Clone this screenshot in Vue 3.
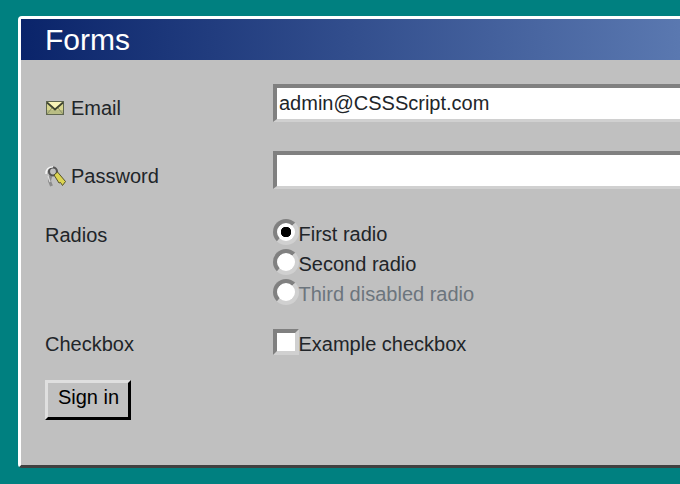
<script setup>
const radios = [
  { label: 'First radio', checked: true, disabled: false },
  { label: 'Second radio', checked: false, disabled: false },
  { label: 'Third disabled radio', checked: false, disabled: true },
]
</script>

<template>
  <main class="page">
    <section class="card">
      <h1 class="title">Forms</h1>
      <form class="body" @submit.prevent>
        <div class="row row-input">
          <label class="label">
            <svg class="icon mail" width="18" height="16" viewBox="0 0 18 16">
              <rect x="0.5" y="1.5" width="17" height="13" fill="#d8d68e" stroke="#5f6650"/>
              <rect x="1" y="10" width="16" height="4" fill="#b9bd84"/>
              <path d="M1 2 L9 9 L17 2 Z" fill="#f8f4b8"/>
              <path d="M1 2.5 L9 9.5 L17 2.5" fill="none" stroke="#3f4430" stroke-width="1.8"/>
              <path d="M1 14 L6 8 M17 14 L12 8" stroke="#8d9268" stroke-width="1"/>
            </svg>
            <span>Email</span>
          </label>
          <input class="text" type="text" value="admin@CSSScript.com" />
        </div>
        <div class="row row-input pw">
          <label class="label">
            <svg class="icon keys" width="22" height="21" viewBox="0 0 22 21">
              <path d="M7 9 L5.5 15 L7.5 20" fill="none" stroke="#8c8c8c" stroke-width="3"/>
              <path d="M4 10 L6 16" stroke="#dcdcdc" stroke-width="1.2"/>
              <circle cx="9" cy="5.5" r="4" fill="none" stroke="#555" stroke-width="2.2"/>
              <path d="M2 8 C2 3.5 5 1 9 0.8" fill="none" stroke="#f4f4f4" stroke-width="1.6"/>
              <path d="M10 9 L13.5 6 L21.5 15.5 L18.5 19.5 L16.5 16.5 L15 17 Z" fill="#dcd452" stroke="#55532a" stroke-width="1"/>
            </svg>
            <span>Password</span>
          </label>
          <input class="text" type="password" />
        </div>
        <div class="row radios-row">
          <span class="label plain">Radios</span>
          <div class="stack">
            <label v-for="r in radios" :key="r.label" class="opt" :class="{ off: r.disabled }">
              <input class="radio" type="radio" name="r" :checked="r.checked" :disabled="r.disabled" />
              <span class="opt-text">{{ r.label }}</span>
            </label>
          </div>
        </div>
        <div class="row check-row">
          <span class="label plain">Checkbox</span>
          <label class="opt">
            <input class="check" type="checkbox" />
            <span class="opt-text">Example checkbox</span>
          </label>
        </div>
        <button class="btn" type="submit">Sign in</button>
      </form>
    </section>
  </main>
</template>

<style scoped>
.page {
  width: 680px;
  height: 484px;
  overflow: hidden;
  background: #008080;
  padding: 16px 0 0 18px;
  box-sizing: border-box;
  font-family: "Liberation Sans", Arial, sans-serif;
  font-size: 20px;
  color: #212529;
}
.card {
  width: 1000px;
  height: 452px;
  box-sizing: border-box;
  background: #c0c0c0;
  border-top: 3px solid #fff;
  border-left: 3px solid #fff;
  border-bottom: 3px solid #404040;
  border-radius: 4px 0 0 4px;
}
.title {
  margin: 0;
  height: 41px;
  padding-left: 24px;
  font-size: 30px;
  font-weight: 400;
  line-height: 41px;
  color: #fff;
  background: linear-gradient(90deg, #0a246a, #5a78b0 66%, #a6caf0);
}
.body {
  padding: 24px 0 0 24px;
}
.row {
  display: grid;
  grid-template-columns: 228px 700px;
}
.row-input {
  align-items: center;
  height: 38px;
}
.pw {
  margin-top: 29px;
}
.label {
  display: flex;
  align-items: center;
  gap: 7px;
  line-height: 24px;
}
.row-input .label {
  position: relative;
  top: 5px;
}
.pw .label {
  top: 6px;
}
.icon {
  flex: none;
}
.mail {
  margin-left: 1px;
}
.keys {
  margin: 0 -2px 0 -1px;
}
.text {
  width: 100%;
  height: 38px;
  box-sizing: border-box;
  padding: 0 2px;
  border: 4px solid;
  border-color: #808080 #d0d0d0 #d0d0d0 #808080;
  border-bottom-width: 3px;
  background: #fff;
  font: inherit;
  color: #212529;
  outline: none;
}
.radios-row {
  margin-top: 29px;
}
.radios-row .label {
  align-items: flex-start;
  margin-top: 5px;
}
.stack {
  display: flex;
  flex-direction: column;
  padding-top: 1px;
}
.opt {
  display: flex;
  align-items: flex-start;
  height: 30.2px;
  line-height: 30px;
}
.opt-text {
  margin-left: -0.5px;
}
.off {
  color: #6c757d;
}
.radio,
.check {
  appearance: none;
  flex: none;
  width: 26px;
  height: 26px;
  margin: 0;
  box-sizing: border-box;
  border: 4px solid;
  border-color: #808080 #d0d0d0 #d0d0d0 #808080;
  background: #fff;
}
.radio {
  border-radius: 50%;
}
.radio:checked {
  background: radial-gradient(circle, #000 0 5px, #fff 5.5px);
}
.check-row {
  margin-top: 19px;
  align-items: start;
}
.check-row .label {
  line-height: 30px;
}
.check-row .opt {
  height: 30px;
}
.btn {
  display: block;
  margin-top: 21px;
  width: 86px;
  height: 40px;
  box-sizing: border-box;
  padding: 0 0 5px 1px;
  border: 3px solid;
  border-color: #dfdfdf #000 #000 #dfdfdf;
  background: #c0c0c0;
  font: inherit;
  color: #000;
}
</style>
